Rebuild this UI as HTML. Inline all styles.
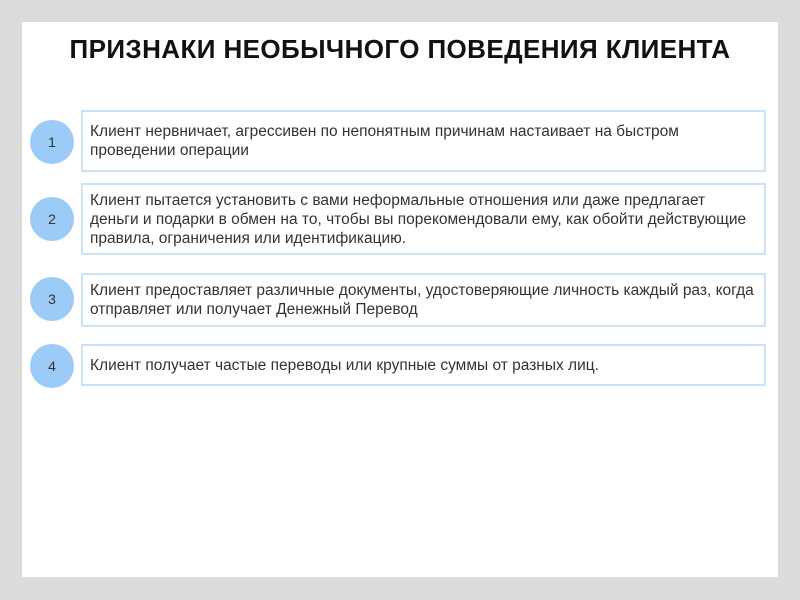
<!DOCTYPE html>
<html><head><meta charset="utf-8"><style>
body{margin:0;width:800px;height:600px;background:#dcdcdc;position:relative;overflow:hidden;font-family:"Liberation Sans",sans-serif}
.p{position:absolute;left:22px;top:22px;width:756px;height:555px;background:#fff}
h1{position:absolute;left:0;width:800px;top:34px;margin:0;text-align:center;font-size:26px;font-weight:bold;color:#111;letter-spacing:0.4px}
.c{position:absolute;left:30px;width:44px;height:44px;border-radius:50%;background:#9ccbf7;color:#333;font-size:14px;text-align:center;line-height:44px}
.b{position:absolute;left:81px;width:685px;border:2px solid #cfe2f5;box-sizing:border-box;font-size:15.5px;line-height:19px;color:#333;padding:0 10px 0 7px;display:flex;align-items:center}
</style></head><body>
<div class="p"></div>
<h1>ПРИЗНАКИ НЕОБЫЧНОГО ПОВЕДЕНИЯ КЛИЕНТА</h1>
<div class="c" style="top:120px">1</div>
<div class="b" style="top:110px;height:62px">Клиент нервничает, агрессивен по непонятным причинам настаивает на быстром проведении операции</div>
<div class="c" style="top:197px">2</div>
<div class="b" style="top:183px;height:72px">Клиент пытается установить с вами неформальные отношения или даже предлагает деньги и подарки в обмен на то, чтобы вы порекомендовали ему, как обойти действующие правила, ограничения или идентификацию.</div>
<div class="c" style="top:277px">3</div>
<div class="b" style="top:273px;height:54px">Клиент предоставляет различные документы, удостоверяющие личность каждый раз, когда отправляет или получает Денежный Перевод</div>
<div class="c" style="top:344px">4</div>
<div class="b" style="top:344px;height:42px">Клиент получает частые переводы или крупные суммы от разных лиц.</div>
</body></html>
